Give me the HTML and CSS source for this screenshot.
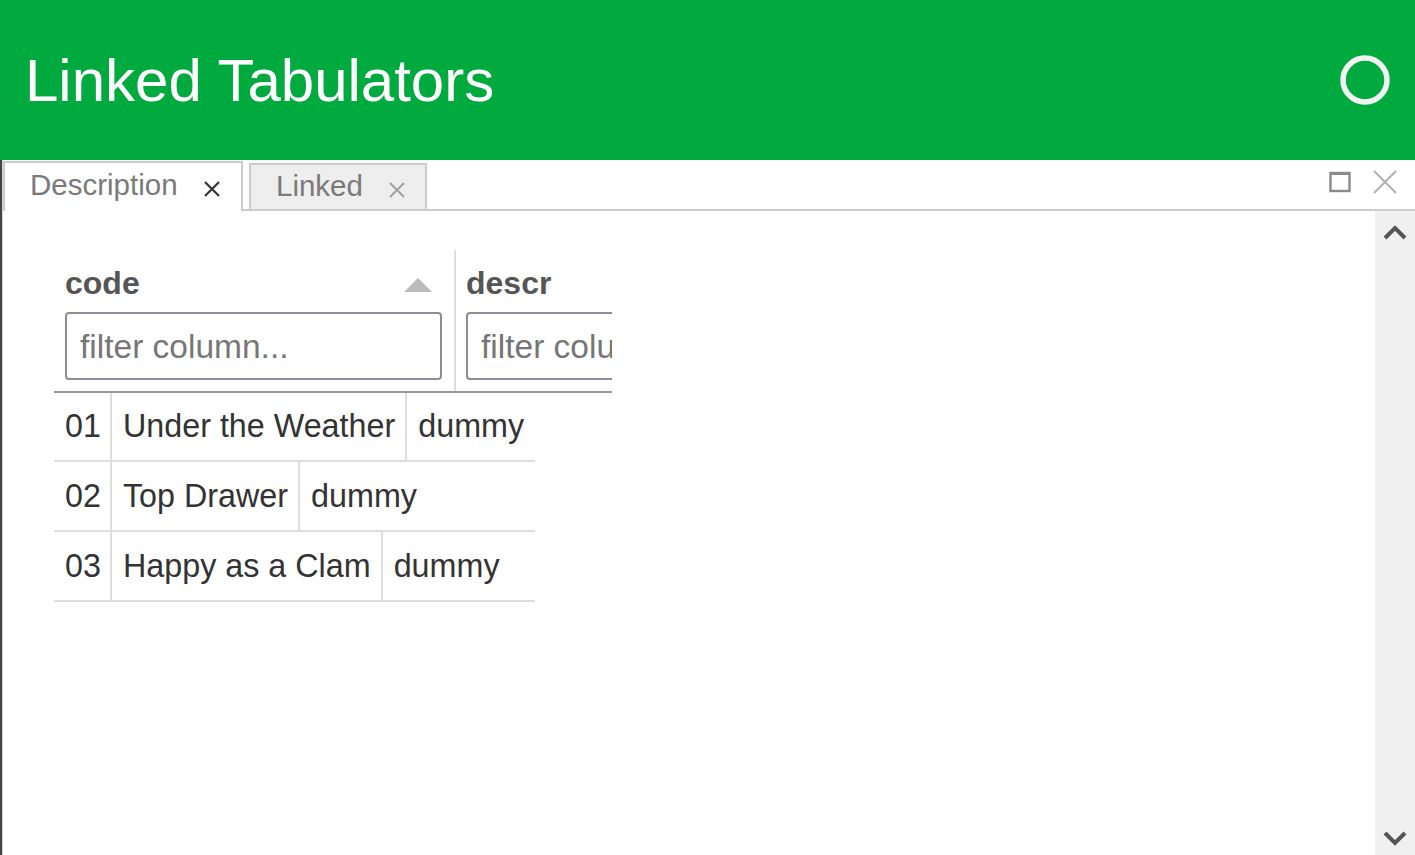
FILE: index.html
```html
<!DOCTYPE html>
<html>
<head>
<meta charset="utf-8">
<title>Linked Tabulators</title>
<link rel="stylesheet" href="styles.css">
</head>
<body>
<header class="app-header">
  <h1 class="app-title">Linked Tabulators</h1>
  <svg class="status-icon" width="54" height="54" viewBox="0 0 54 54"><circle cx="27" cy="27" r="22" fill="none" stroke="#f2f2f2" stroke-width="5.5"/></svg>
</header>
<div class="panel">
  <div class="panel-inner">
    <div class="tabbar">
      <div class="tab tab-active">
        <span class="tab-label">Description</span>
        <svg class="tab-x" width="18" height="18" viewBox="0 0 18 18"><path d="M2 2L16 16M16 2L2 16" stroke="#333" stroke-width="2.2"/></svg>
      </div>
      <div class="tab tab-inactive">
        <span class="tab-label">Linked</span>
        <svg class="tab-x" width="18" height="18" viewBox="0 0 18 18"><path d="M2 2L16 16M16 2L2 16" stroke="#a0a0a0" stroke-width="2"/></svg>
      </div>
      <div class="tabbar-spacer"></div>
      <div class="tabbar-tools">
        <svg width="22" height="22" viewBox="0 0 22 22"><rect x="1.5" y="2" width="19" height="18" fill="none" stroke="#8a8a8a" stroke-width="2.4"/><rect x="1" y="1" width="20" height="3" fill="#8a8a8a"/></svg>
        <svg width="24" height="24" viewBox="0 0 24 24"><path d="M1 1L23 23M23 1L1 23" stroke="#b0b0b0" stroke-width="2"/></svg>
      </div>
    </div>
    <div class="body">
      <div class="content">
        <div class="table">
          <div class="thead">
            <div class="th th-code">
              <div class="th-title">
                <span>code</span>
                <span class="sort-arrow"></span>
              </div>
              <div class="filter"><span class="placeholder">filter column...</span></div>
            </div>
            <div class="th th-descr">
              <div class="th-title"><span>descr</span></div>
              <div class="filter"><span class="placeholder">filter column...</span></div>
            </div>
          </div>
          <div class="tbody">
            <div class="row"><div class="cell">01</div><div class="cell">Under the Weather</div><div class="cell">dummy</div></div>
            <div class="row"><div class="cell">02</div><div class="cell">Top Drawer</div><div class="cell">dummy</div></div>
            <div class="row"><div class="cell">03</div><div class="cell">Happy as a Clam</div><div class="cell">dummy</div></div>
          </div>
        </div>
      </div>
      <div class="scrollbar">
        <svg width="24" height="18" viewBox="0 0 24 18"><polyline points="2,15 12,5 22,15" fill="none" stroke="#555" stroke-width="4"/></svg>
        <svg width="24" height="18" viewBox="0 0 24 18"><polyline points="2,3 12,13 22,3" fill="none" stroke="#555" stroke-width="4"/></svg>
      </div>
    </div>
  </div>
</div>
</body>
</html>
```

FILE: styles.css
```css
* { box-sizing: border-box; }
html, body { margin: 0; padding: 0; height: 100%; }
body {
  font-family: "Liberation Sans", Arial, sans-serif;
  background: #fff;
  display: flex;
  flex-direction: column;
  overflow: hidden;
}
.app-header {
  height: 160px;
  flex: 0 0 160px;
  background: #00aa3f;
  display: flex;
  align-items: center;
  justify-content: space-between;
  padding: 0 23px 0 25px;
}
.app-title {
  margin: 0;
  font-weight: normal;
  font-size: 60px;
  color: #fff;
  line-height: 68px;
  padding-top: 2px;
}
.status-icon { display: block; }
.panel {
  flex: 1;
  display: flex;
  border-left: 2px solid #454545;
  min-height: 0;
}
.panel-inner {
  flex: 1;
  display: flex;
  flex-direction: column;
  border-left: 1px solid #d4d4d4;
  min-height: 0;
}
.tabbar {
  height: 51px;
  flex: 0 0 51px;
  display: flex;
  align-items: flex-end;
  border-bottom: 2px solid #cccccc;
}
.tab {
  display: flex;
  align-items: center;
  font-size: 29.5px;
  color: #7a7a7a;
  border: 2px solid #cccccc;
  border-bottom: none;
}
.tab-active {
  background: #fff;
  width: 240px;
  height: 50px;
  margin-bottom: -2px;
  padding-left: 25px;
  padding-bottom: 4px;
}
.tab-inactive {
  background: #eeeeee;
  width: 178px;
  height: 46px;
  margin-left: 6px;
  padding-left: 25px;
  padding-bottom: 2px;
}
.tab-label { line-height: 34px; }
.tab-active .tab-x { margin-left: 25px; margin-top: 8px; }
.tab-inactive .tab-x { margin-left: 25px; margin-top: 8px; }
.tabbar-spacer { flex: 1; }
.tabbar-tools {
  align-self: center;
  display: flex;
  align-items: center;
  gap: 22px;
  padding-right: 18px;
  padding-bottom: 6px;
}
.tabbar-tools svg { display: block; }
.body {
  flex: 1;
  display: flex;
  min-height: 0;
}
.content {
  flex: 1;
  padding: 39px 0 0 51px;
}
.scrollbar {
  width: 40px;
  flex: 0 0 40px;
  background: #f0f0f0;
  display: flex;
  flex-direction: column;
  justify-content: space-between;
  align-items: center;
  padding: 12px 0 7px 0;
}
.scrollbar svg { display: block; }
.table {
  width: 558px;
  overflow: hidden;
}
.thead {
  display: flex;
  border-bottom: 2px solid #999999;
  width: 558px;
}
.th {
  flex: 0 0 auto;
  padding: 15px 0 11px 11px;
  font-size: 32px;
  font-weight: bold;
  color: #555555;
}
.th-code {
  width: 402px;
  padding-right: 12px;
  border-right: 2px solid #dddddd;
}
.th-descr {
  width: 200px;
  padding-left: 10px;
}
.th-title {
  display: flex;
  align-items: center;
  justify-content: space-between;
  height: 37px;
  line-height: 37px;
}
.sort-arrow {
  width: 0;
  height: 0;
  border-left: 14px solid transparent;
  border-right: 14px solid transparent;
  border-bottom: 14px solid #bbbbbb;
  margin-right: 10px;
  margin-top: 2px;
}
.filter {
  margin-top: 10px;
  height: 68px;
  border: 2px solid #8f8b9b;
  border-radius: 4px;
  display: flex;
  align-items: center;
  padding-left: 13px;
  white-space: nowrap;
  overflow: hidden;
}
.th-descr .filter { width: 200px; border-right: none; border-radius: 4px 0 0 4px; }
.placeholder {
  font-size: 33.5px;
  font-weight: normal;
  color: #767676;
  padding-top: 1px;
}
.tbody { width: 481px; }
.row {
  display: flex;
  height: 69px;
  border-bottom: 2px solid #dddddd;
}
.row + .row { height: 70px; }
.cell {
  font-size: 32.3px;
  color: #333333;
  padding: 0 10px 0 11px;
  display: flex;
  align-items: center;
  white-space: nowrap;
  border-right: 2px solid #dddddd;
}
.cell:first-child { padding-right: 9px; }
.cell:last-child { border-right: none; }
```
